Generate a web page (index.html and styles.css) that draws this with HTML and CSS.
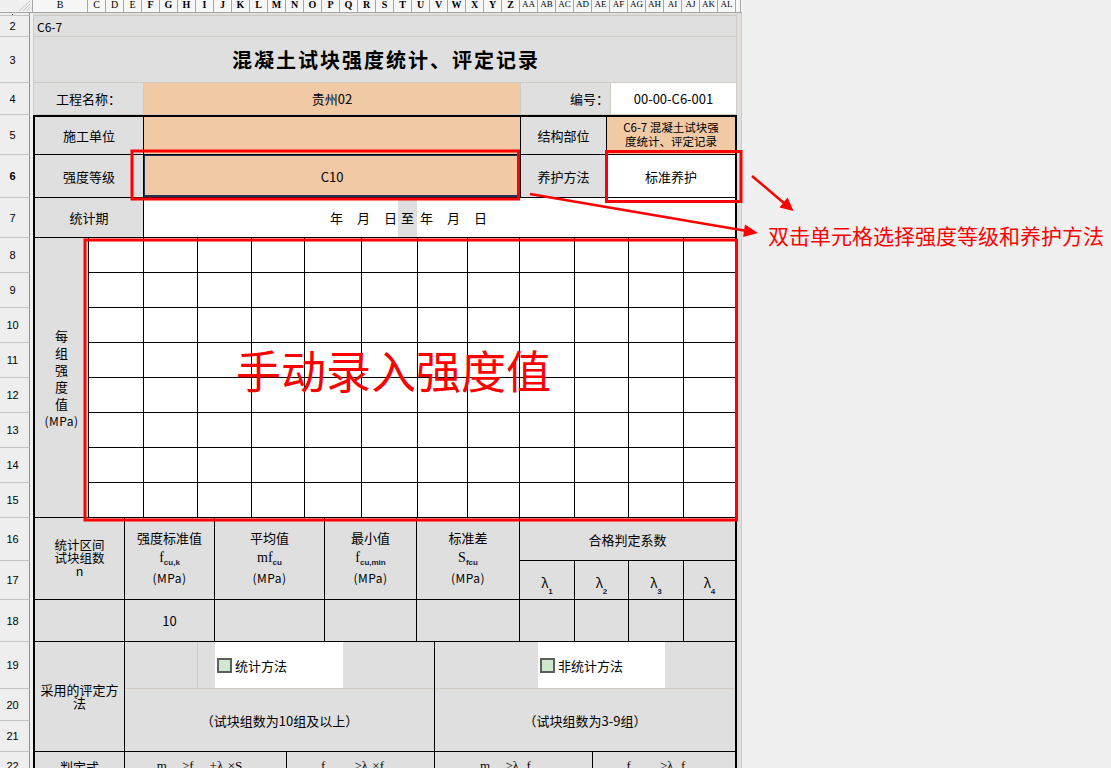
FILE: index.html
```html
<!DOCTYPE html>
<html lang="zh-CN">
<head>
<meta charset="utf-8">
<title>混凝土试块强度统计、评定记录</title>
<link rel="stylesheet" href="styles.css">
</head>
<body>
<header class="colhdr">
  <div class="corner"><svg width="32" height="12" viewBox="0 0 32 12"><path d="M30 1 L19 11 M30 4 L23 11 M30 7 L27 11" stroke="#c4c4c4" stroke-width="1" fill="none"/></svg></div>
  <div class="ch wide">B</div>
  <div class="ch lt">C</div><div class="ch lt">D</div><div class="ch lt">E</div>
  <div class="ch">F</div><div class="ch">G</div><div class="ch">H</div><div class="ch">I</div><div class="ch">J</div><div class="ch">K</div><div class="ch">L</div><div class="ch">M</div><div class="ch">N</div><div class="ch">O</div><div class="ch">P</div><div class="ch">Q</div><div class="ch">R</div><div class="ch">S</div><div class="ch">T</div><div class="ch">U</div><div class="ch">V</div><div class="ch">W</div><div class="ch">X</div><div class="ch">Y</div><div class="ch">Z</div>
  <div class="ch dbl">AA</div><div class="ch dbl">AB</div><div class="ch dbl">AC</div><div class="ch dbl">AD</div><div class="ch dbl">AE</div><div class="ch dbl">AF</div><div class="ch dbl">AG</div><div class="ch dbl">AH</div><div class="ch dbl">AI</div><div class="ch dbl">AJ</div><div class="ch dbl">AK</div><div class="ch dbl">AL</div>
  <div class="ch end"></div>
</header>

<div class="main">
  <div class="rowhdr">
    <div class="rh"><i class="dot"></i></div>
    <div class="rh">2</div>
    <div class="rh">3</div>
    <div class="rh">4</div>
    <div class="rh">5</div>
    <div class="rh act">6</div>
    <div class="rh">7</div>
    <div class="rh">8</div>
    <div class="rh">9</div>
    <div class="rh">10</div>
    <div class="rh">11</div>
    <div class="rh">12</div>
    <div class="rh">13</div>
    <div class="rh">14</div>
    <div class="rh">15</div>
    <div class="rh">16</div>
    <div class="rh">17</div>
    <div class="rh">18</div>
    <div class="rh">19</div>
    <div class="rh">20</div>
    <div class="rh">21</div>
    <div class="rh">22</div>
  </div>

  <div class="sheet">
    <div class="r1"></div>
    <div class="r2">C6-7</div>
    <div class="r3">混凝土试块强度统计、评定记录</div>
    <div class="r4">
      <div class="gray">工程名称：</div>
      <div class="org">贵州02</div>
      <div class="gray rt">编号：</div>
      <div class="wht">00-00-C6-001</div>
    </div>

    <div class="tbl">
      <div class="band b5">
        <div class="gray">施工单位</div>
        <div class="org"></div>
        <div class="gray">结构部位</div>
        <div class="org small"><p>C6-7 混凝土试块强<br>度统计、评定记录</p></div>
      </div>
      <div class="band b6">
        <div class="gray">强度等级</div>
        <div class="org sel">C10</div>
        <div class="gray">养护方法</div>
        <div class="wht">标准养护</div>
      </div>
      <div class="band b7">
        <div class="gray">统计期</div>
        <div class="wht date al-end"><span>年</span><span>月</span><span>日</span></div>
        <div class="gray">至</div>
        <div class="wht date al-start"><span>年</span><span>月</span><span>日</span></div>
      </div>

      <div class="b8">
        <div class="lab"><p>每<br>组<br>强<br>度<br>值<br><span class="mpa">(MPa)</span></p></div>
        <div class="c"></div><div class="c"></div><div class="c"></div><div class="c"></div><div class="c"></div><div class="c"></div><div class="c"></div><div class="c"></div><div class="c"></div><div class="c"></div><div class="c"></div><div class="c"></div>
        <div class="c"></div><div class="c"></div><div class="c"></div><div class="c"></div><div class="c"></div><div class="c"></div><div class="c"></div><div class="c"></div><div class="c"></div><div class="c"></div><div class="c"></div><div class="c"></div>
        <div class="c"></div><div class="c"></div><div class="c"></div><div class="c"></div><div class="c"></div><div class="c"></div><div class="c"></div><div class="c"></div><div class="c"></div><div class="c"></div><div class="c"></div><div class="c"></div>
        <div class="c"></div><div class="c"></div><div class="c"></div><div class="c"></div><div class="c"></div><div class="c"></div><div class="c"></div><div class="c"></div><div class="c"></div><div class="c"></div><div class="c"></div><div class="c"></div>
        <div class="c"></div><div class="c"></div><div class="c"></div><div class="c"></div><div class="c"></div><div class="c"></div><div class="c"></div><div class="c"></div><div class="c"></div><div class="c"></div><div class="c"></div><div class="c"></div>
        <div class="c"></div><div class="c"></div><div class="c"></div><div class="c"></div><div class="c"></div><div class="c"></div><div class="c"></div><div class="c"></div><div class="c"></div><div class="c"></div><div class="c"></div><div class="c"></div>
        <div class="c"></div><div class="c"></div><div class="c"></div><div class="c"></div><div class="c"></div><div class="c"></div><div class="c"></div><div class="c"></div><div class="c"></div><div class="c"></div><div class="c"></div><div class="c"></div>
        <div class="c"></div><div class="c"></div><div class="c"></div><div class="c"></div><div class="c"></div><div class="c"></div><div class="c"></div><div class="c"></div><div class="c"></div><div class="c"></div><div class="c"></div><div class="c"></div>
      </div>

      <div class="b16">
        <div class="h2 tight"><p class="w4">统计区间试块组数n</p></div>
        <div class="h2 stack"><span>强度标准值</span><span class="fm">f<sub>cu,k</sub></span><span class="mpa">(MPa)</span></div>
        <div class="h2 stack"><span>平均值</span><span class="fm">mf<sub>cu</sub></span><span class="mpa">(MPa)</span></div>
        <div class="h2 stack"><span>最小值</span><span class="fm">f<sub>cu,min</sub></span><span class="mpa">(MPa)</span></div>
        <div class="h2 stack"><span>标准差</span><span class="fm">S<sub>fcu</sub></span><span class="mpa">(MPa)</span></div>
        <div class="span4 nr">合格判定系数</div>
        <div class="lam"><span>λ<sub>1</sub></span></div>
        <div class="lam"><span>λ<sub>2</sub></span></div>
        <div class="lam"><span>λ<sub>3</sub></span></div>
        <div class="lam nr"><span>λ<sub>4</sub></span></div>
        <div></div>
        <div>10</div>
        <div></div><div></div><div></div><div></div><div></div><div></div>
        <div class="nr"></div>
      </div>

      <div class="band b19">
        <div class="gray lab2"><p>采用的评定方法</p></div>
        <div class="col">
          <div class="top">
            <div class="g a73"></div>
            <div class="g a17"></div>
            <div class="wbox w128"><i class="cb"></i>统计方法</div>
            <div class="g fill"></div>
          </div>
          <div class="bot">（试块组数为10组及以上）</div>
        </div>
        <div class="col">
          <div class="top">
            <div class="g a103"></div>
            <div class="wbox w127"><i class="cb"></i>非统计方法</div>
            <div class="g fill"></div>
          </div>
          <div class="bot">（试块组数为3-9组）</div>
        </div>
      </div>

      <div class="band b22">
        <div class="gray">判定式</div>
        <div class="gray fml"><span class="fm">m<sub>fcu</sub> ≥f<sub>cu,k</sub>+λ<sub>1</sub>×S<sub>fcu</sub></span></div>
        <div class="gray fml"><span class="fm">f<sub>cu,min</sub> ≥λ<sub>2</sub>×f<sub>cu,k</sub></span></div>
        <div class="gray fml"><span class="fm">m<sub>fcu</sub> ≥λ<sub>3</sub> f<sub>cu,k</sub></span></div>
        <div class="gray fml"><span class="fm">f<sub>cu,min</sub> ≥λ<sub>4</sub> f<sub>cu,k</sub></span></div>
      </div>
    </div>
  </div>
</div>

<svg class="notes" width="1111" height="768" viewBox="0 0 1111 768">
  <g fill="none" stroke="#ff0000" stroke-width="3">
    <rect x="132" y="151" width="386.5" height="48"/>
    <rect x="606.5" y="151.5" width="134.5" height="50"/>
    <rect x="85" y="240" width="651.5" height="280"/>
    <line x1="530" y1="194" x2="747" y2="231" stroke-width="2.5"/>
    <line x1="752" y1="176" x2="785" y2="204" stroke-width="2.5"/>
  </g>
  <g fill="#ff0000">
    <polygon points="758,233 743,237 745,224.5"/>
    <polygon points="793.5,211 779.5,207.5 787.5,197.5"/>
  </g>
</svg>
<div class="note-side">双击单元格选择强度等级和养护方法</div>
<div class="note-big">手动录入强度值</div>
</body>
</html>
```

FILE: styles.css
```css
:root {
  --rows: 3px 21px 46px 32px 40px 43px 40px repeat(8, 35px) 43px 39px 42px 47px 32px 31px 28px;
  --grid: #cfcac4;
  --cell: #dfdfdf;
  --orange: #f1c9a5;
}

* { box-sizing: border-box; margin: 0; padding: 0; }

html, body { width: 1111px; height: 768px; overflow: hidden; }

body {
  background: #f0f0f0;
  font-family: "Noto Sans CJK SC", "Noto Sans", sans-serif;
  font-size: 13px;
  color: #000;
  position: relative;
}

/* column header */
.colhdr {
  display: flex;
  height: 13px;
  width: 742px;
  background: #f7f7f7;
  border-bottom: 1px solid #a6a6a6;
}
.corner { width: 33px; flex: none; border-right: 1px solid #a6a6a6; background: #f0f0f0; }
.corner svg { display: block; }
.ch {
  width: 18px;
  flex: none;
  border-right: 1px solid #a6a6a6;
  font-family: "Liberation Serif", serif;
  font-weight: 700;
  font-size: 10px;
  line-height: 9px;
  text-align: center;
  overflow: hidden;
}
.ch.wide { width: 55px; font-weight: 400; }
.ch.lt { font-weight: 400; }
.ch.dbl { font-size: 9px; font-weight: 400; }
.ch.end { width: 5px; }

/* body */
.main { display: flex; }

.rowhdr {
  width: 33px;
  flex: none;
  display: grid;
  grid-template-rows: var(--rows);
  grid-template-columns: 30px;
}
.rh {
  border-right: 1px solid #8e8e8e;
  border-bottom: 1px solid #c4c4c4;
  background: #eeeeee;
  font-family: "Liberation Sans", sans-serif;
  font-size: 11px;
  display: flex;
  align-items: center;
  justify-content: center;
  padding-right: 4px;
  overflow: hidden;
}
.rh.act { font-weight: 700; }
.dot { display: block; width: 1px; height: 1px; background: #333; }

.sheet {
  width: 709px;
  flex: none;
  display: grid;
  grid-template-rows: var(--rows);
  grid-template-columns: 704px 4px;
  background: var(--cell);
  border-right: 1px solid var(--grid);
}

.r1 { grid-row: 1; grid-column: 1; border-bottom: 1px solid var(--grid); }
.r2, .r3, .r4 {
  grid-column: 1;
  border-left: 1px solid var(--grid);
  border-right: 1px solid var(--grid);
  border-bottom: 1px solid var(--grid);
}
.r2 {
  grid-row: 2;
  display: flex;
  align-items: center;
  padding-left: 3px;
  font-size: 12px;
}
.r3 {
  grid-row: 3;
  display: flex;
  align-items: center;
  justify-content: center;
  font-size: 20px;
  font-weight: 700;
  letter-spacing: 2px;
  padding-left: 2px;
}
.r4 {
  grid-row: 4;
  display: grid;
  grid-template-columns: 110px 377px 90px 1fr;
}
.r4 > div {
  display: flex;
  align-items: center;
  justify-content: center;
  border-right: 1px solid var(--grid);
}
.r4 > div:last-child { border-right: none; }
.r4 .rt { justify-content: flex-end; padding-right: 1px; }

.gray { background: var(--cell); }
.org { background: var(--orange); }
.wht { background: #fff; }

/* bordered table */
.tbl {
  grid-row: 5 / 23;
  grid-column: 1;
  border: 2px solid #000;
  border-bottom: none;
  display: flex;
  flex-direction: column;
}

.band {
  display: grid;
  flex: none;
  border-bottom: 1px solid #000;
}
.band > div {
  border-right: 1px solid #000;
  display: flex;
  align-items: center;
  justify-content: center;
  text-align: center;
}
.band > div:last-child { border-right: none; }

.b5 { height: 38px; grid-template-columns: 109px 377px 86px 1fr; }
.b6 { height: 43px; grid-template-columns: 109px 377px 86px 1fr; }
.small { font-size: 11.5px; line-height: 14px; padding-bottom: 3px; }
.band > .sel {
  box-shadow: inset 0 0 0 1px #1c3555, inset 0 -2px 0 0 #1c3555;
}

.b7 { height: 40px; grid-template-columns: 109px 254px 19px 1fr; }
.b7 > div:nth-child(n+2) { border-right: none; }
.date { gap: 14px; }
.band > .al-end { justify-content: flex-end; padding-right: 1px; }
.band > .al-start { justify-content: flex-start; padding-left: 3px; }

/* rows 8-15 */
.b8 {
  display: grid;
  flex: none;
  grid-template-columns: 54px 55px 54px 54px 53px 57px 56px 50px 52px 55px 54px 55px 1fr;
  grid-template-rows: repeat(8, 35px);
}
.b8 .lab {
  grid-row: 1 / 9;
  background: var(--cell);
  border-right: 1px solid #000;
  border-bottom: 1px solid #000;
  display: flex;
  align-items: center;
  justify-content: center;
  text-align: center;
  line-height: 17px;
}
.b8 .c {
  background: #fff;
  border-right: 1px solid #000;
  border-bottom: 1px solid #000;
}
.b8 .c:nth-child(12n+1) { border-right: none; }

.mpa { font-size: 12px; letter-spacing: 0.5px; }

/* rows 16-18 */
.b16 {
  display: grid;
  flex: none;
  grid-template-columns: 90px 90px 110px 92px 103px 55px 54px 55px 1fr;
  grid-template-rows: 43px 39px 42px;
}
.b16 > div {
  border-right: 1px solid #000;
  border-bottom: 1px solid #000;
  display: flex;
  align-items: center;
  justify-content: center;
  text-align: center;
  background: var(--cell);
}
.b16 > .nr { border-right: none; }
.b16 > .h2 { grid-row: 1 / 3; }
.b16 > .tight { font-size: 12.5px; line-height: 13px; padding-bottom: 2px; }
.w4 { width: 4.1em; }
.b16 > .stack {
  flex-direction: column;
  justify-content: flex-start;
  padding-top: 10px;
  line-height: 20px;
}
.b16 > .span4 { grid-column: 6 / 10; }
.b16 > .lam { padding-top: 4px; }
.lam sub { vertical-align: -6px; }

.fm { font-family: "Liberation Serif", serif; font-size: 14px; }
sub {
  font-family: "Liberation Sans", sans-serif;
  font-size: 8px;
  font-weight: 700;
  vertical-align: -3px;
  line-height: 0;
  color: #1a1a3a;
}

/* rows 19-21 */
.b19 { height: 110px; grid-template-columns: 90px 310px 1fr; }
.band > .lab2 { line-height: 12.5px; font-size: 13px; }
.band > .col {
  flex-direction: column;
  align-items: stretch;
  justify-content: flex-start;
}
.top {
  height: 47px;
  flex: none;
  display: flex;
  border-bottom: 1px solid var(--grid);
}
.top .g { background: var(--cell); }
.a73 { width: 73px; border-right: 1px solid var(--grid); }
.a17 { width: 17px; }
.a103 { width: 103px; }
.wbox {
  background: #fff;
  display: flex;
  align-items: center;
  padding-left: 2px;
}
.w128 { width: 128px; }
.w127 { width: 127px; }
.fill { flex: 1; }
.bot {
  flex: 1;
  display: flex;
  align-items: center;
  justify-content: center;
  background: var(--cell);
}
.cb {
  display: block;
  width: 15px;
  height: 15px;
  border: 2px solid #5e5e5e;
  background: #cfe6cf;
  margin-right: 3px;
}

/* row 22 */
.b22 { height: 28px; grid-template-columns: 90px 162px 148px 158px 1fr; border-bottom: none; }
.fml { white-space: nowrap; }
.fml .fm { font-size: 13px; }

/* annotations */
.notes { position: absolute; left: 0; top: 0; pointer-events: none; }
.note-side {
  position: absolute;
  left: 768px;
  top: 225px;
  font-size: 21px;
  line-height: 1;
  color: #ff0000;
  white-space: nowrap;
}
.note-big {
  position: absolute;
  left: 236px;
  top: 347px;
  font-size: 45px;
  line-height: 1;
  color: #ff0000;
  white-space: nowrap;
}
```
